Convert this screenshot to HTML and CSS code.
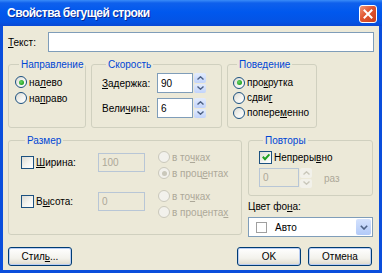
FILE: index.html
```html
<!DOCTYPE html>
<html>
  <head>
    <title>Свойства бегущей строки</title>
    <meta charset="utf-8">
    <link rel="stylesheet" href="styles.css">
  </head>
  <body>
    <div class="window">
      <div class="titlebar">
        <span class="title">Свойства бегущей строки</span>
        <span class="close">
          <svg width="10" height="10" viewBox="0 0 10 10"><path d="M1.5 1.5 L8.5 8.5 M8.5 1.5 L1.5 8.5" stroke="#fff" stroke-width="2" stroke-linecap="square"/></svg>
        </span>
      </div>
      <div class="client">
        <div class="text-row">
          <span class="lbl"><u>Т</u>екст:</span>
          <div class="edit wide"></div>
        </div>

        <div class="row-top">
          <fieldset class="grp dir">
            <legend>Направление</legend>
            <div class="opt"><span class="radio on"></span><span>на<u>л</u>ево</span></div>
            <div class="opt"><span class="radio"></span><span>на<u>п</u>раво</span></div>
          </fieldset>
          <fieldset class="grp speed">
            <legend>Скорость</legend>
            <div class="field">
              <span class="flabel"><u>З</u>адержка:</span>
              <div class="spin">
                <div class="edit num">90</div>
                <div class="spinbtns">
                  <span><svg width="7" height="4" viewBox="0 0 7 4"><path d="M0.5 3.5 L3.5 0.8 L6.5 3.5" fill="none" stroke="#4D6185" stroke-width="1.4"/></svg></span>
                  <span><svg width="7" height="4" viewBox="0 0 7 4"><path d="M0.5 0.5 L3.5 3.2 L6.5 0.5" fill="none" stroke="#4D6185" stroke-width="1.4"/></svg></span>
                </div>
              </div>
            </div>
            <div class="field">
              <span class="flabel">Вели<u>ч</u>ина:</span>
              <div class="spin">
                <div class="edit num">6</div>
                <div class="spinbtns">
                  <span><svg width="7" height="4" viewBox="0 0 7 4"><path d="M0.5 3.5 L3.5 0.8 L6.5 3.5" fill="none" stroke="#4D6185" stroke-width="1.4"/></svg></span>
                  <span><svg width="7" height="4" viewBox="0 0 7 4"><path d="M0.5 0.5 L3.5 3.2 L6.5 0.5" fill="none" stroke="#4D6185" stroke-width="1.4"/></svg></span>
                </div>
              </div>
            </div>
          </fieldset>
          <fieldset class="grp behave">
            <legend>Поведение</legend>
            <div class="opt"><span class="radio on"></span><span>про<u>к</u>рутка</span></div>
            <div class="opt"><span class="radio"></span><span>сдви<u>г</u></span></div>
            <div class="opt"><span class="radio"></span><span>попере<u>м</u>енно</span></div>
          </fieldset>
        </div>

        <div class="row-mid">
          <fieldset class="grp size">
            <legend>Размер</legend>
            <div class="size-grid">
              <div class="chk-label"><span class="check"></span><span><u>Ш</u>ирина:</span></div>
              <div class="edit off">100</div>
              <div class="units">
                <div class="opt dim"><span class="radio off"></span><span>в то<u>ч</u>ках</span></div>
                <div class="opt dim"><span class="radio off on"></span><span>в проц<u>е</u>нтах</span></div>
              </div>
              <div class="chk-label"><span class="check"></span><span>В<u>ы</u>сота:</span></div>
              <div class="edit off">0</div>
              <div class="units">
                <div class="opt dim"><span class="radio off"></span><span>в то<u>ч</u>ках</span></div>
                <div class="opt dim"><span class="radio off"></span><span>в процента<u>х</u></span></div>
              </div>
            </div>
          </fieldset>

          <div class="side">
            <fieldset class="grp repeat">
              <legend>Повторы</legend>
              <div class="chk-label"><span class="check on">
                <svg width="10" height="10" viewBox="0 0 10 10"><path d="M1.8 4.8 L4 7.2 L8.4 2.4" fill="none" stroke="#21A121" stroke-width="2"/></svg>
              </span><span>Непреры<u>в</u>но</span></div>
              <div class="count">
                <div class="spin">
                  <div class="edit off cnt">0</div>
                  <div class="spinbtns off">
                    <span><svg width="7" height="4" viewBox="0 0 7 4"><path d="M0.5 3.5 L3.5 0.8 L6.5 3.5" fill="none" stroke="#C9C7BA" stroke-width="1.4"/></svg></span>
                    <span><svg width="7" height="4" viewBox="0 0 7 4"><path d="M0.5 0.5 L3.5 3.2 L6.5 0.5" fill="none" stroke="#C9C7BA" stroke-width="1.4"/></svg></span>
                  </div>
                </div>
                <span class="dim">раз</span>
              </div>
            </fieldset>
            <div class="color-label">Цвет фо<u>н</u>а:</div>
            <div class="combo">
              <span class="swatch"></span>
              <span class="combo-text">Авто</span>
              <span class="drop">
                <svg width="8" height="5" viewBox="0 0 8 5"><path d="M0.8 0.8 L4 4 L7.2 0.8" fill="none" stroke="#4D6185" stroke-width="1.6"/></svg>
              </span>
            </div>
          </div>
        </div>

        <div class="buttons">
          <span class="btn"><span>Стил<u>ь</u>...</span></span>
          <div class="btn-pair">
            <span class="btn">OK</span>
            <span class="btn">Отмена</span>
          </div>
        </div>
      </div>
    </div>
  </body>
</html>
```

FILE: styles.css
```css
*{
  margin:0;
  padding:0;
  box-sizing:border-box;
}
body{
  width:382px;
  height:273px;
  overflow:hidden;
  font-family:"Liberation Sans", Arial, sans-serif;
  font-size:10px;
  color:#000;
}
u{
  text-decoration:underline;
}
.window{
  width:382px;
  height:273px;
  background:#0A4EDC;
  display:flex;
  flex-direction:column;
}
.titlebar{
  height:26px;
  display:flex;
  align-items:center;
  justify-content:space-between;
  padding:0 5px 0 7px;
  background:linear-gradient(#3A8CF8 0, #0F60EC 3px, #0058EE 12px, #0453E4 22px, #0A48D4 26px);
}
.title{
  color:#fff;
  font-weight:bold;
  font-size:12px;
  text-shadow:1px 1px 0 #0A2A94;
  letter-spacing:-0.5px;
}
.close{
  width:18px;
  height:18px;
  margin-top:1px;
  border:1px solid #fff;
  border-radius:3px;
  background:linear-gradient(135deg, #F19779 0, #E0542F 45%, #C8401E 100%);
  display:flex;
  align-items:center;
  justify-content:center;
}
.client{
  flex:1;
  margin:0 3px 3px 3px;
  background:#ECE9D8;
  padding:6px 5px 0 5px;
  display:flex;
  flex-direction:column;
}
.text-row{
  display:flex;
  align-items:center;
  height:20px;
}
.lbl{
  width:40px;
}
.edit{
  height:20px;
  border:1px solid #7F9DB9;
  background:#fff;
  padding-left:3px;
  display:flex;
  align-items:center;
}
.wide{
  flex:1;
}
.edit.off{
  background:#ECE9D8;
  border-color:#B8C6D6;
  color:#ACA899;
  height:19px;
}
.row-top{
  display:flex;
  gap:5px;
  margin-top:6px;
  height:70px;
}
.grp{
  border:1px solid #D0D0BF;
  border-radius:3px;
  min-width:0;
}
.grp legend{
  color:#0046D5;
  padding:0 2px;
  margin-left:4px;
  line-height:13px;
}
.opt{
  display:flex;
  align-items:center;
  height:16px;
  gap:2px;
}
.dim{
  color:#ACA899;
}
.radio{
  width:12px;
  height:12px;
  border-radius:50%;
  border:1px solid #1C5180;
  background:linear-gradient(135deg, #DCDBD3 0, #F4F4F0 55%, #fff 100%);
  display:flex;
  align-items:center;
  justify-content:center;
  flex:none;
}
.radio.on::after{
  content:"";
  width:5px;
  height:5px;
  border-radius:50%;
  background:radial-gradient(circle at 40% 40%, #6AD56A, #21A121 70%);
}
.radio.off{
  border-color:#CAC8BB;
  background:#F2F1EC;
}
.radio.off.on::after{
  background:#CAC8BB;
}
.dir{
  width:78px;
  padding:3px 6px 0 6px;
}
.speed{
  width:131px;
  padding:2px 0 0 10px;
}
.behave{
  width:90px;
  padding:4px 5px 0 5px;
}
.behave .opt{
  height:15px;
}
.field{
  display:flex;
  align-items:center;
  height:20px;
  margin-bottom:5px;
}
.flabel{
  width:55px;
}
.spin{
  display:flex;
  height:20px;
}
.num{
  width:36px;
}
.spinbtns{
  width:12px;
  display:flex;
  flex-direction:column;
  gap:1px;
  margin-left:1px;
}
.spinbtns span{
  flex:1;
  display:flex;
  align-items:center;
  justify-content:center;
  border-radius:2px;
  background:linear-gradient(#E3ECFD, #C1D3FB);
}
.spinbtns.off span{
  background:#F2F1EA;
}
.row-mid{
  display:flex;
  gap:6px;
  margin-top:6px;
}
.size{
  width:234px;
  height:101px;
  padding:2px 0 0 12px;
}
.size-grid{
  display:grid;
  grid-template-columns:64px 47px 1fr;
  column-gap:13px;
  row-gap:7px;
  align-items:start;
}
.size-grid .edit{
  margin-top:4px;
}
.chk-label{
  display:flex;
  align-items:center;
  gap:2px;
  height:19px;
}
.size-grid .chk-label{
  margin-top:4px;
}
.check{
  width:13px;
  height:13px;
  border:1px solid #1C5180;
  background:linear-gradient(135deg, #DCDBD3 0, #F4F4F0 55%, #fff 100%);
  display:flex;
  align-items:center;
  justify-content:center;
  flex:none;
}
.side{
  width:125px;
  display:flex;
  flex-direction:column;
}
.repeat{
  height:62px;
  padding:0 0 0 10px;
}
.repeat .chk-label{
  height:16px;
  margin-top:2px;
}
.count{
  display:flex;
  align-items:center;
  gap:12px;
  margin-top:3px;
}
.cnt{
  width:40px;
  height:20px;
}
.color-label{
  margin-top:4px;
  height:13px;
  line-height:13px;
}
.combo{
  margin-top:4px;
  height:20px;
  border:1px solid #7F9DB9;
  background:#fff;
  display:flex;
  align-items:center;
  padding:1px 1px 1px 7px;
}
.swatch{
  width:11px;
  height:11px;
  border:1px solid #A0A0A0;
  background:#fff;
}
.combo-text{
  flex:1;
  padding-left:8px;
}
.drop{
  width:15px;
  height:100%;
  border-radius:2px;
  background:linear-gradient(#D4E2FD, #B2CAF8);
  display:flex;
  align-items:center;
  justify-content:center;
}
.buttons{
  display:flex;
  justify-content:space-between;
  margin-top:10px;
  padding-right:2px;
}
.btn-pair{
  display:flex;
  gap:7px;
}
.btn{
  width:64px;
  height:19px;
  border:1px solid #003C74;
  border-radius:3px;
  background:linear-gradient(#FFFFFF, #F3F2EC 60%, #E3E0D4 90%, #D6D0C5);
  box-shadow:inset 0 0 0 1px #B9CDF3;
  display:flex;
  align-items:center;
  justify-content:center;
}
```
